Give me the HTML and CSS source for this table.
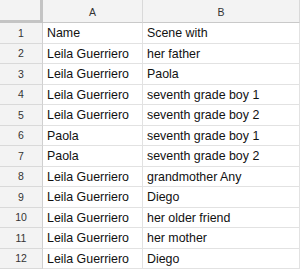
FILE: index.html
```html
<!DOCTYPE html>
<html lang="en">
  <head>
    <meta charset="UTF-8" />
    <title>Scenes</title>
    <link rel="stylesheet" href="styles.css">
  </head>
  <body>
    <div class="sheet">
      <div class="corner"></div>
      <div class="col-head">A</div>
      <div class="col-head">B</div>

      <div class="row-head">1</div>
      <div class="cell">Name</div>
      <div class="cell">Scene with</div>

      <div class="row-head">2</div>
      <div class="cell">Leila Guerriero</div>
      <div class="cell">her father</div>

      <div class="row-head">3</div>
      <div class="cell">Leila Guerriero</div>
      <div class="cell">Paola</div>

      <div class="row-head">4</div>
      <div class="cell">Leila Guerriero</div>
      <div class="cell">seventh grade boy 1</div>

      <div class="row-head">5</div>
      <div class="cell">Leila Guerriero</div>
      <div class="cell">seventh grade boy 2</div>

      <div class="row-head">6</div>
      <div class="cell">Paola</div>
      <div class="cell">seventh grade boy 1</div>

      <div class="row-head">7</div>
      <div class="cell">Paola</div>
      <div class="cell">seventh grade boy 2</div>

      <div class="row-head">8</div>
      <div class="cell">Leila Guerriero</div>
      <div class="cell">grandmother Any</div>

      <div class="row-head">9</div>
      <div class="cell">Leila Guerriero</div>
      <div class="cell">Diego</div>

      <div class="row-head">10</div>
      <div class="cell">Leila Guerriero</div>
      <div class="cell">her older friend</div>

      <div class="row-head">11</div>
      <div class="cell">Leila Guerriero</div>
      <div class="cell">her mother</div>

      <div class="row-head">12</div>
      <div class="cell">Leila Guerriero</div>
      <div class="cell">Diego</div>
    </div>
  </body>
</html>
```

FILE: styles.css
```css
body {
  margin: 0;
  padding: 0;
  background: #ffffff;
  font-family: "Liberation Sans", Arial, sans-serif;
}

.sheet {
  display: grid;
  grid-template-columns: 43px 100px 157px;
  grid-template-rows: 23px repeat(12, 20.5px);
  width: 300px;
}

.corner {
  background: #f3f3f3;
  border-right: 3px solid #c4c4c4;
  border-bottom: 3px solid #c4c4c4;
}

.col-head {
  display: flex;
  align-items: center;
  justify-content: center;
  background: #f3f3f3;
  border-right: 1px solid #d9d9d9;
  border-bottom: 1px solid #c9c9c9;
  font-size: 10.5px;
  color: #333;
  padding-top: 1px;
}

.row-head {
  display: flex;
  align-items: center;
  justify-content: center;
  background: #f3f3f3;
  border-right: 1px solid #d0d0d0;
  border-bottom: 1px solid #d9d9d9;
  font-size: 10.5px;
  color: #333;
}

.cell {
  display: flex;
  align-items: center;
  padding: 1px 0 0 4px;
  border-right: 1px solid #e2e2e2;
  border-bottom: 1px solid #e2e2e2;
  font-size: 12.4px;
  color: #111;
  white-space: nowrap;
  overflow: hidden;
}
```
